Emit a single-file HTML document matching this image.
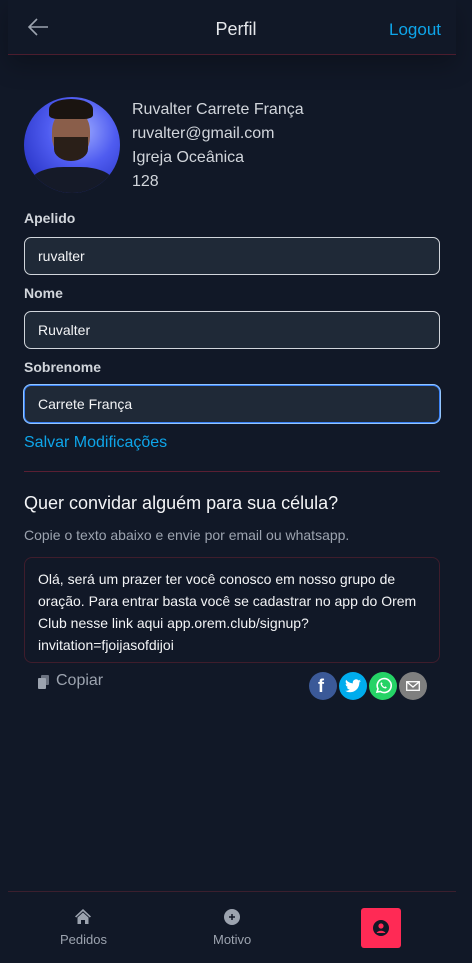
<!DOCTYPE html>
<html><head><meta charset="utf-8"><style>
*{box-sizing:border-box;margin:0;padding:0}
body{width:472px;height:963px;background:#111827;font-family:"Liberation Sans",sans-serif;color:#d1d5db;position:relative;overflow:hidden}
.a{position:absolute}
.lbl{position:absolute;left:24px;font-size:14px;font-weight:bold;color:#d1d5db}
.inp{position:absolute;left:24px;width:416px;height:38px;border:1px solid #d1d5db;border-radius:7px;background:#1f2937;color:#f3f4f6;font-size:14px;padding:10px 13px;line-height:17px}
.c{position:absolute;top:672px;width:28px;height:28px;border-radius:50%}
</style></head><body>
<div class="a" style="left:8px;top:0;width:448px;height:55px;box-shadow:0 10px 24px rgba(0,0,0,.25);border-bottom:1px solid #4c1d2e;background:#111827"></div>
<svg class="a" style="left:27px;top:17px" width="22" height="20" viewBox="0 0 22 20"><path d="M21 10H2M10 2L2 10l8 8" stroke="#9ca3af" stroke-width="1.6" fill="none"/></svg>
<div class="a" style="left:0;width:472px;top:19px;text-align:center;font-size:18px;color:#e5e7eb">Perfil</div>
<div class="a" style="left:389px;top:20px;font-size:17px;color:#0ea5e9">Logout</div>
<div class="a" style="left:24px;top:97px;width:96px;height:96px;border-radius:50%;background:radial-gradient(circle at 60% 35%,#9aa8ff 0,#4f5cf0 40%,#2a36c8 80%);overflow:hidden">
<div class="a" style="left:28px;top:12px;width:38px;height:50px;border-radius:45%;background:#8a5e4a"></div>
<div class="a" style="left:25px;top:2px;width:44px;height:20px;border-radius:50% 50% 20% 20%;background:#1a1410"></div>
<div class="a" style="left:30px;top:40px;width:34px;height:24px;border-radius:0 0 50% 50%;background:#2a1f18"></div>
<div class="a" style="left:6px;top:70px;width:84px;height:40px;border-radius:40% 40% 0 0;background:#151a28"></div>
</div>
<div class="a" style="left:132px;top:98px;font-size:16px;line-height:24px;color:#d1d5db">Ruvalter Carrete França<br>ruvalter@gmail.com<br>Igreja Oceânica<br>128</div>
<div class="lbl" style="top:210px">Apelido</div>
<div class="inp" style="top:237px">ruvalter</div>
<div class="lbl" style="top:285px">Nome</div>
<div class="inp" style="top:311px">Ruvalter</div>
<div class="lbl" style="top:359px">Sobrenome</div>
<div class="inp" style="top:385px;border:1px solid #3b82f6;box-shadow:0 0 0 1px #93c5fd">Carrete França</div>
<div class="a" style="left:24px;top:434px;font-size:16px;color:#0ea5e9">Salvar Modificações</div>
<div class="a" style="left:24px;top:471px;width:416px;height:1px;background:#5a1f33"></div>
<div class="a" style="left:24px;top:493px;font-size:18px;color:#f3f4f6">Quer convidar alguém para sua célula?</div>
<div class="a" style="left:24px;top:527px;font-size:14px;color:#9ca3af">Copie o texto abaixo e envie por email ou whatsapp.</div>
<div class="a" style="left:24px;top:557px;width:416px;height:106px;border:1px solid #3f1d2c;border-radius:8px;padding:10px 13px;font-size:14px;line-height:22px;color:#f3f4f6">Olá, será um prazer ter você conosco em nosso grupo de oração. Para entrar basta você se cadastrar no app do Orem Club nesse link aqui app.orem.club/signup?<br>invitation=fjoijasofdijoi</div>
<svg class="a" style="left:38px;top:675px" width="12" height="14" viewBox="0 0 12 14"><rect x="3" y="0" width="8" height="10" rx="1" fill="#6b7280"/><rect x="0" y="3" width="8" height="11" rx="1" fill="#9ca3af"/></svg>
<div class="a" style="left:56px;top:672px;font-size:16px;color:#9ca3af">Copiar</div>
<div class="c" style="left:309px;background:#3b5998"><span class="a" style="left:9px;top:4px;font-size:18px;font-weight:bold;color:#fff">f</span></div>
<div class="c" style="left:339px;background:#00aced"><svg class="a" style="left:6px;top:7px" width="16" height="14" viewBox="0 0 24 20"><path d="M24 2.3a10 10 0 01-2.8.8A5 5 0 0023.3.4a10 10 0 01-3.1 1.2A4.9 4.9 0 0011.8 6 14 14 0 011.7.9a4.9 4.9 0 001.5 6.6A4.9 4.9 0 011 6.9a4.9 4.9 0 003.9 4.8 5 5 0 01-2.2.1 4.9 4.9 0 004.6 3.4A9.9 9.9 0 010 17.2 14 14 0 007.5 19.4c9.1 0 14-7.5 14-14v-.6A10 10 0 0024 2.3z" fill="#fff"/></svg></div>
<div class="c" style="left:369px;background:#25d366"><svg class="a" style="left:5px;top:5px" width="18" height="18" viewBox="0 0 18 18"><path d="M3 15l1-3.2A7 7 0 1 1 6.5 14.5z" stroke="#fff" stroke-width="1.6" fill="none"/><path d="M6.5 6c0 3 2.5 5.5 5.5 5.5l.8-1.3-1.5-.8-.7.7c-1-.4-2.3-1.7-2.7-2.7l.7-.7-.8-1.5z" fill="#fff"/></svg></div>
<div class="c" style="left:399px;background:#7f7f7f"><svg class="a" style="left:7px;top:9px" width="14" height="10" viewBox="0 0 14 10"><rect x=".7" y=".7" width="12.6" height="8.6" fill="none" stroke="#fff" stroke-width="1.3"/><path d="M1 1l6 5 6-5" stroke="#fff" stroke-width="1.3" fill="none"/></svg></div>
<div class="a" style="left:8px;top:891px;width:448px;height:1px;background:#3b1f2e"></div>
<svg class="a" style="left:74px;top:908px" width="18" height="17" viewBox="0 0 18 17"><path d="M9 1L1 8.5l1.2 1L9 3.3l6.8 6.2 1.2-1z" fill="#9ca3af"/><path d="M3.5 9.5L9 4.5l5.5 5V16H11v-4H7v4H3.5z" fill="#9ca3af"/></svg>
<div class="a" style="left:60px;top:932px;font-size:13px;color:#9ca3af">Pedidos</div>
<svg class="a" style="left:224px;top:909px" width="16" height="16" viewBox="0 0 16 16"><circle cx="8" cy="8" r="8" fill="#9ca3af"/><path d="M8 5v6M5 8h6" stroke="#111827" stroke-width="1.5"/></svg>
<div class="a" style="left:213px;top:932px;font-size:13px;color:#9ca3af">Motivo</div>
<div class="a" style="left:361px;top:908px;width:40px;height:40px;background:#ff2a55;border-radius:3px"><svg class="a" style="left:12px;top:12px" width="16" height="16" viewBox="0 0 16 16"><circle cx="8" cy="8" r="8" fill="#111827"/><circle cx="8" cy="6" r="2.6" fill="#ff2a55"/><path d="M3.5 13a5 4 0 0 1 9 0" fill="#ff2a55"/></svg></div>
</body></html>
